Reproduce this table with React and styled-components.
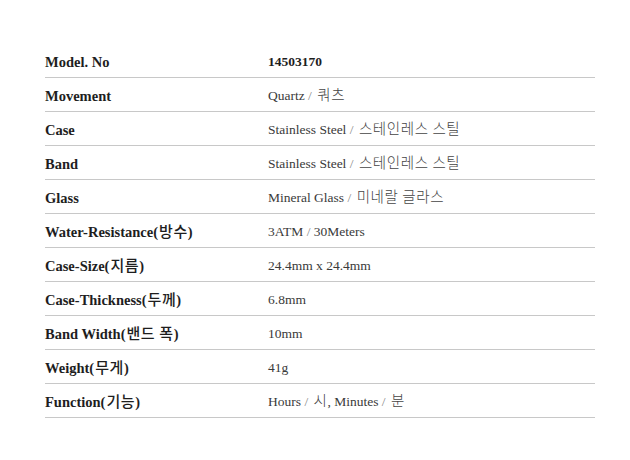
import React from "react";
import styled, { createGlobalStyle } from "styled-components";

const specs = [
  ["Model. No", "14503170", true],
  ["Movement", "Quartz / 쿼츠"],
  ["Case", "Stainless Steel / 스테인레스 스틸"],
  ["Band", "Stainless Steel / 스테인레스 스틸"],
  ["Glass", "Mineral Glass / 미네랄 글라스"],
  ["Water-Resistance(방수)", "3ATM / 30Meters"],
  ["Case-Size(지름)", "24.4mm x 24.4mm"],
  ["Case-Thickness(두께)", "6.8mm"],
  ["Band Width(밴드 폭)", "10mm"],
  ["Weight(무게)", "41g"],
  ["Function(기능)", "Hours / 시, Minutes / 분"],
];

const GlobalStyle = createGlobalStyle`
  body {
    margin: 0;
    background: #fff;
    font-family: "Liberation Serif", "Noto Sans CJK KR", serif;
  }
`;

const Page = styled.div`
  padding: 44px 0 0 45px;
`;

const Table = styled.div`
  width: 550px;
  display: flex;
  flex-direction: column;
`;

const Row = styled.div`
  display: grid;
  grid-template-columns: 223px 1fr;
  align-items: center;
  box-sizing: border-box;
  height: 34px;
  padding-top: 3px;
  border-bottom: 1px solid #c8c8c8;
  font-size: 13.5px;
  line-height: 18px;
`;

const Label = styled.div`
  font-size: 14.5px;
  font-weight: bold;
  color: #1e1e1e;
  white-space: nowrap;
`;

const Value = styled.div`
  color: ${(p) => (p.strong ? "#1e1e1e" : "#3a3a3a")};
  font-weight: ${(p) => (p.strong ? "bold" : "normal")};
  white-space: nowrap;
`;

const Hangul = styled.span`
  font-family: "Noto Sans CJK KR", sans-serif;
  font-size: ${(p) => (p.bold ? "15px" : "14.5px")};
  line-height: 14px;
  letter-spacing: 0.6px;
  margin-left: ${(p) => (p.bold ? "1px" : "2px")};
  font-weight: ${(p) => (p.bold ? 500 : 300)};
  color: ${(p) => (p.bold ? "#1e1e1e" : "#444")};
`;

const Slash = styled.span`
  color: #888;
`;

// split a string into latin / hangul / slash runs
const renderText = (text, bold) =>
  text.split(/([\uac00-\ud7a3]+(?:\s[\uac00-\ud7a3]+)*|\/)/).map((part, i) => {
    if (!part) return null;
    if (part === "/") return <Slash key={i}>/</Slash>;
    if (/[\uac00-\ud7a3]/.test(part))
      return (
        <Hangul key={i} bold={bold}>
          {part}
        </Hangul>
      );
    return <React.Fragment key={i}>{part}</React.Fragment>;
  });

const App = () => {
  return (
    <Page>
      <GlobalStyle />
      <Table>
        {specs.map(([label, value, strong]) => (
          <Row key={label}>
            <Label>{renderText(label, true)}</Label>
            <Value strong={strong}>{renderText(value)}</Value>
          </Row>
        ))}
      </Table>
    </Page>
  );
};

export default App;
